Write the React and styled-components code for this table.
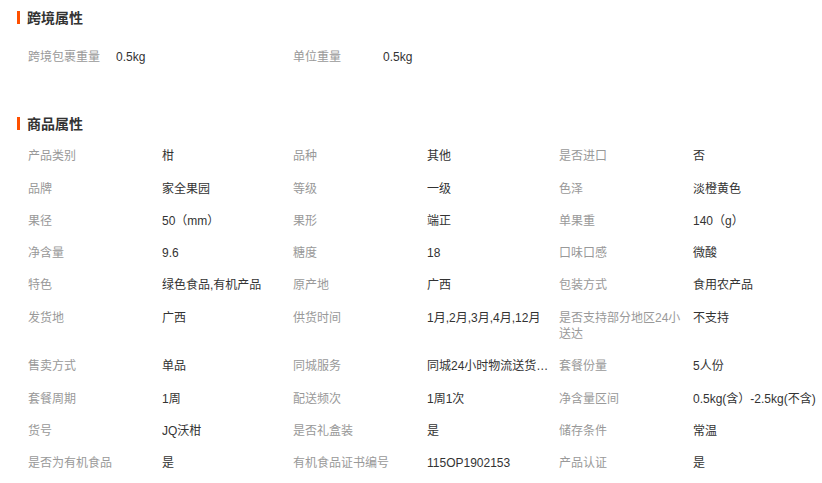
import React from 'react';
import styled, { createGlobalStyle } from 'styled-components';

const GlobalStyle = createGlobalStyle`
  body {
    margin: 0;
    background: #fff;
    font-family: "Liberation Sans", "Noto Sans CJK SC", sans-serif;
  }
`;

const Page = styled.div`
  width: 822px;
  padding-top: 7px;
`;

const Section = styled.div`
  margin-bottom: ${props => props.$gapBottom || 0}px;
`;

const Title = styled.h3`
  display: flex;
  align-items: center;
  gap: 7px;
  margin: 0 0 ${props => props.$gap}px 17px;
  height: 20px;
  font-size: 14px;
  font-weight: 700;
  color: #333;
  &::before {
    content: '';
    width: 3px;
    height: 13px;
    background: #ff5000;
  }
`;

const Grid = styled.div`
  display: grid;
  grid-template-columns: ${props => props.$cols};
  padding-left: 28px;
  font-size: 12px;
  line-height: 16.3px;
`;

const Label = styled.div`
  padding: 8px 10px 8px 0;
  color: #999;
`;

const Value = styled.div`
  padding: 8px 6px 8px 0;
  color: #333;
  white-space: nowrap;
  overflow: ${props => (props.$last ? 'visible' : 'hidden')};
  text-overflow: ellipsis;
`;

const crossAttrs = [
  ['跨境包裹重量', '0.5kg'],
  ['单位重量', '0.5kg'],
];

const goodsAttrs = [
  ['产品类别', '柑'], ['品种', '其他'], ['是否进口', '否'],
  ['品牌', '家全果园'], ['等级', '一级'], ['色泽', '淡橙黄色'],
  ['果径', '50（mm）'], ['果形', '端正'], ['单果重', '140（g）'],
  ['净含量', '9.6'], ['糖度', '18'], ['口味口感', '微酸'],
  ['特色', '绿色食品,有机产品'], ['原产地', '广西'], ['包装方式', '食用农产品'],
  ['发货地', '广西'], ['供货时间', '1月,2月,3月,4月,12月'], ['是否支持部分地区24小送达', '不支持'],
  ['售卖方式', '单品'], ['同城服务', '同城24小时物流送货上门'], ['套餐份量', '5人份'],
  ['套餐周期', '1周'], ['配送频次', '1周1次'], ['净含量区间', '0.5kg(含）-2.5kg(不含)'],
  ['货号', 'JQ沃柑'], ['是否礼盒装', '是'], ['储存条件', '常温'],
  ['是否为有机食品', '是'], ['有机食品证书编号', '115OP1902153'], ['产品认证', '是'],
];

function AttrCells({ items, perRow }) {
  return items.map(([label, value], i) => (
    <React.Fragment key={label}>
      <Label>{label}</Label>
      <Value title={value} $last={i % perRow === perRow - 1}>{value}</Value>
    </React.Fragment>
  ));
}

export default function App() {
  return (
    <Page>
      <GlobalStyle />
      <Section $gapBottom={40}>
        <Title $gap={14}>跨境属性</Title>
        <Grid $cols="88px 177px 90px 1fr">
          <AttrCells items={crossAttrs} perRow={2} />
        </Grid>
      </Section>
      <Section>
        <Title $gap={7}>商品属性</Title>
        <Grid $cols="134px 131px 134px 132px 134px 1fr">
          <AttrCells items={goodsAttrs} perRow={3} />
        </Grid>
      </Section>
    </Page>
  );
}
